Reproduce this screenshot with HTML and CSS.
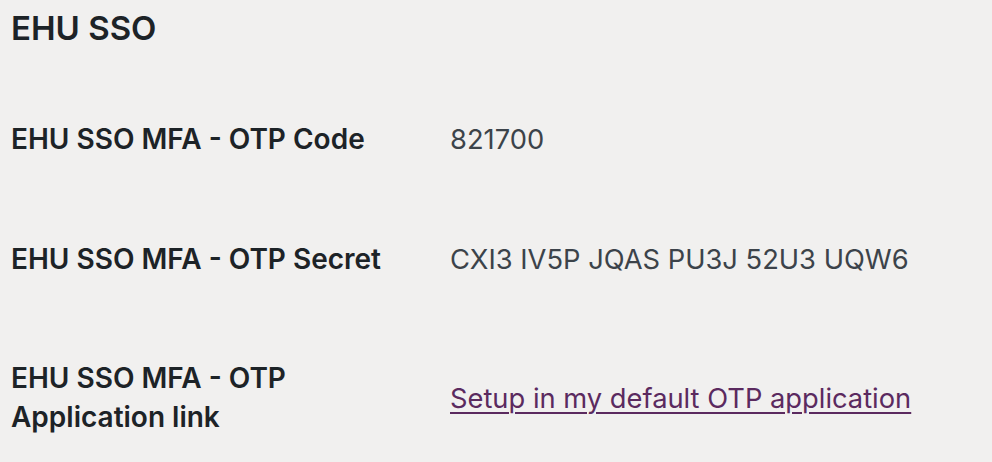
FILE: index.html
```html
<!DOCTYPE html>
<html lang="en">
<head>
<meta charset="utf-8">
<title>EHU SSO</title>
<link rel="stylesheet" href="styles.css">
</head>
<body>
<h2 class="section-title">EHU SSO</h2>
<div class="form-table">
  <div class="row">
    <div class="label">EHU SSO MFA - OTP Code</div>
    <div class="value">821700</div>
  </div>
  <div class="row">
    <div class="label">EHU SSO MFA - OTP Secret</div>
    <div class="value">CXI3 IV5P JQAS PU3J 52U3 UQW6</div>
  </div>
  <div class="row">
    <div class="label">EHU SSO MFA - OTP Application link</div>
    <div class="value"><a class="otp-link" href="#">Setup in my default OTP application</a></div>
  </div>
</div>
</body>
</html>
```
FILE: styles.css
```css
html, body {
  margin: 0;
  padding: 0;
  background: #f1f0ef;
}
body {
  font-family: Inter, "Noto Sans", sans-serif;
  color: #1d2327;
  padding: 7px 0 0 11px;
}
.section-title {
  margin: 0;
  font-size: 33px;
  line-height: 43px;
  font-weight: 600;
  color: #1d2327;
}
.form-table {
  margin-top: 30px;
  display: flex;
  flex-direction: column;
}
.row {
  display: grid;
  grid-template-columns: 439px 1fr;
  align-items: center;
}
.label {
  padding: 40px 0 40.5px;
  font-size: 28px;
  line-height: 39px;
  font-weight: 600;
  width: 405px;
}
.value {
  font-size: 27.3px;
  line-height: 39px;
  color: #3c434a;
}
.otp-link {
  color: #5b2a5f;
  text-decoration: underline;
  text-underline-offset: 4px;
  text-decoration-thickness: 2px;
}
```
